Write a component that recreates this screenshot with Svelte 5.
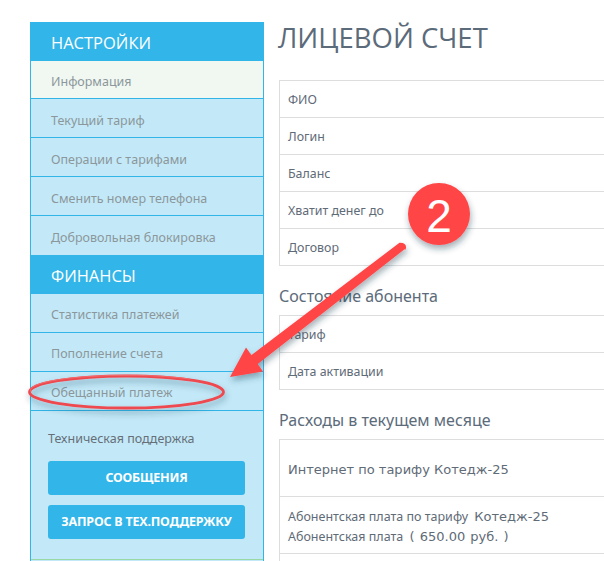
<script>
  const settings = ['Текущий тариф', 'Операции с тарифами', 'Сменить номер телефона', 'Добровольная блокировка'];
  const finance = ['Статистика платежей', 'Пополнение счета', 'Обещанный платеж'];
  const account = ['ФИО', 'Логин', 'Баланс', 'Хватит денег до', 'Договор'];
  const status = ['Тариф', 'Дата активации'];
</script>

<div class="page">
  <aside class="side">
    <h2>НАСТРОЙКИ</h2>
    <a class="item active" href="#a">Информация</a>
    {#each settings as s, i}
      <a class="item low" class:last={i === settings.length - 1} href="#a">{s}</a>
    {/each}
    <h2>ФИНАНСЫ</h2>
    {#each finance as s}
      <a class="item" href="#a">{s}</a>
    {/each}
    <div class="support">
      <div class="support-title">Техническая поддержка</div>
      <button>СООБЩЕНИЯ</button>
      <button>ЗАПРОС В ТЕХ.ПОДДЕРЖКУ</button>
    </div>
    <div class="green"></div>
  </aside>
  <main class="main">
    <h1>ЛИЦЕВОЙ СЧЕТ</h1>
    <div class="table">
      {#each account as r}<div class="row">{r}</div>{/each}
    </div>
    <h3>Состояние абонента</h3>
    <div class="table">
      {#each status as r}<div class="row">{r}</div>{/each}
    </div>
    <h3>Расходы в текущем месяце</h3>
    <div class="table">
      <div class="row tall mono">Интернет по тарифу Котедж-25</div>
      <div class="row two">
        <div>Абонентская плата по тарифу <span class="mono gap">Котедж-25</span></div>
        <div>Абонентская плата <span class="mono gap">( 650.00 руб. )</span></div>
      </div>
      <div class="row"></div>
    </div>
  </main>

  <svg class="overlay" width="604" height="561" viewBox="0 0 604 561">
    <defs>
      <filter id="sh" x="-20%" y="-20%" width="150%" height="150%">
        <feDropShadow dx="1" dy="4" stdDeviation="3" flood-color="#1a3a4a" flood-opacity="0.4" />
      </filter>
    </defs>
    <g filter="url(#sh)">
      <ellipse cx="126.500" cy="392" rx="97" ry="16" fill="none" stroke="#ee4a50" stroke-width="2.800" />
      <path d="M31 392 A96 15 0 0 1 190 379" fill="none" stroke="#f26a6c" stroke-width="1" />
      <path d="M399.500 242.800 Q406.500 242.500 406 248 Q405.500 250.500 404.500 249.200 L257.400 364.300 L250.600 355.700 Z" fill="#ff4444" />
      <path d="M230 377 L246 347.500 L263 371.500 Z" fill="#ff4444" />
      <circle cx="439" cy="214" r="31" fill="#ff4444" />
    </g>
    <text x="439" y="232" text-anchor="middle" class="num">2</text>
  </svg>
</div>

<style>
  :global(body) { margin: 0; background: #fff; }
  .page {
    position: relative;
    display: flex;
    width: 604px;
    height: 561px;
    overflow: hidden;
    box-sizing: border-box;
    padding: 22px 0 0 30px;
    font-family: "Noto Sans", "Open Sans", sans-serif;
  }
  .side {
    width: 234px;
    flex: none;
    box-sizing: border-box;
    background: #c3e9f8;
    border-left: 1px solid #32b5e8;
    border-right: 1px solid #32b5e8;
    height: 539px;
  }
  h2 {
    margin: 0 -1px;
    height: 39px;
    background: #32b5e8;
    color: #fff;
    font: 400 16.500px/41px "Open Sans", sans-serif;
    padding-left: 21px;
  }
  .item {
    display: block;
    box-sizing: border-box;
    height: 39px;
    line-height: 42px;
    padding-left: 20px;
    font-size: 12.500px;
    color: #8c979b;
    text-decoration: none;
    border-bottom: 1px solid #32b5e8;
  }
  .item.low { line-height: 44px; }
  .item.last { border-bottom: none; }
  .active { background: #f1f8f2; height: 38px; }
  .support { padding: 19px 18px 0 17px; }
  .support-title { font-size: 12.500px; line-height: 18px; color: #666f78; margin-bottom: 13px; }
  button {
    display: block;
    width: 197px;
    height: 34px;
    margin: 0 0 10px;
    padding: 0;
    border: none;
    border-radius: 3px;
    background: #32b5e8;
    color: #fff;
    font: 700 12.500px/34px "Noto Sans", sans-serif;
    letter-spacing: -0.2px;
  }
  .green { margin-top: 20px; height: 1px; background: #97d8a4; }
  .main { margin-left: 15px; width: 340px; flex: none; }
  h1 {
    margin: 0 0 0 -1px;
    height: 58px;
    font: 400 27.500px/32px "Open Sans", sans-serif;
    color: #5c6b7a;
  }
  .table { border: 1px solid #ddd; border-right: none; width: 340px; box-sizing: border-box; }
  .row {
    box-sizing: border-box;
    height: 37px;
    line-height: 38px;
    padding-left: 8px;
    font-size: 12.400px;
    color: #5f6b77;
    border-bottom: 1px solid #ddd;
  }
  .row:last-child { border-bottom: none; height: 36px; }
  h3 {
    margin: 0;
    height: 49px;
    padding-top: 19px;
    box-sizing: border-box;
    font: 400 16px/22px "Noto Sans", sans-serif;
    color: #5c6b7a;
  }
  .row.tall { height: 57px; line-height: 60px; }
  .mono { font-family: "DejaVu Sans", sans-serif; font-size: 13px; }
  .gap { margin-left: 3px; word-spacing: 1px; }
  .row.two { height: 57px; padding-top: 10px; line-height: 20px; font-size: 12.500px; }
  .overlay { position: absolute; left: 0; top: 0; pointer-events: none; }
  .num { font: 400 46px "Liberation Sans", sans-serif; fill: #fff; }
</style>
